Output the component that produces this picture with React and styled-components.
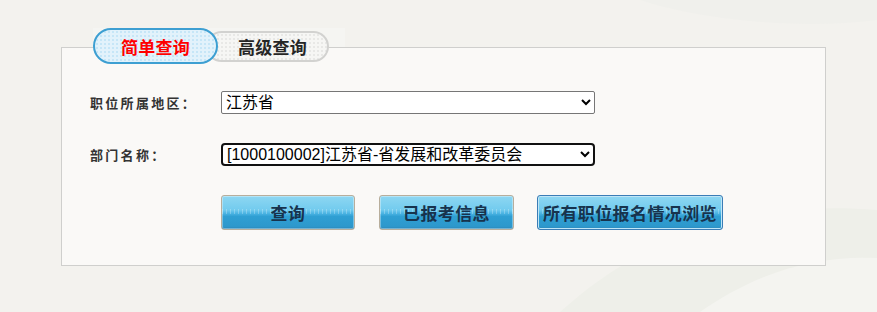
import styled, { createGlobalStyle } from 'styled-components';

const GlobalStyle = createGlobalStyle`
    html, body {
        margin: 0;
        padding: 0;
        background: #f3f2ee;
    }
    body {
        font-family: "Noto Sans CJK SC", "Noto Sans", sans-serif;
        overflow: hidden;
    }
`;

const regions = ['江苏省'];
const departments = ['[1000100002]江苏省-省发展和改革委员会'];

const App = () => {
    return (
        <Page>
            <GlobalStyle />
            <Backdrop viewBox="0 0 877 312" preserveAspectRatio="none">
                <path d="M560 312 C 650 230, 760 200, 877 210 L 877 312 Z" fill="#eeefe9" />
                <path d="M700 312 C 760 270, 820 255, 877 258 L 877 312 Z" fill="#f4f4f0" />
                <path d="M640 0 C 700 20, 800 30, 877 20 L 877 0 Z" fill="#f0f0ec" />
            </Backdrop>
            <Box>
                <TabStrip>
                    <Tab $active>简单查询</Tab>
                    <Tab>高级查询</Tab>
                </TabStrip>
                <Panel>
                    <Row>
                        <Label>职位所属地区：</Label>
                        <Select defaultValue={regions[0]}>
                            {regions.map(r => <option key={r}>{r}</option>)}
                        </Select>
                    </Row>
                    <Row>
                        <Label>部门名称：</Label>
                        <Select $focused defaultValue={departments[0]}>
                            {departments.map(d => <option key={d}>{d}</option>)}
                        </Select>
                    </Row>
                    <Buttons>
                        <Button $w={134}>查询</Button>
                        <Button $w={135}>已报考信息</Button>
                        <Button $w={186} $hover>所有职位报名情况浏览</Button>
                    </Buttons>
                </Panel>
            </Box>
        </Page>
    );
}

const Page = styled.div`
    position: relative;
    width: 877px;
    height: 312px;
    overflow: hidden;
`;

const Backdrop = styled.svg`
    position: absolute;
    left: 0;
    top: 0;
    width: 100%;
    height: 100%;
    z-index: 0;
`;

const Box = styled.div`
    position: relative;
    z-index: 1;
    width: 765px;
    padding: 28px 0 0 61px;
`;

const TabStrip = styled.div`
    position: relative;
    z-index: 2;
    display: flex;
    align-items: center;
    width: 252px;
    height: 36px;
    margin-left: 32px;
    background: linear-gradient(#f5f5f2 0, #f5f5f2 19px, transparent 19px);
`;

const Tab = styled.div`
    box-sizing: border-box;
    display: flex;
    align-items: center;
    justify-content: center;
    position: relative;
    z-index: ${p => (p.$active ? 2 : 1)};
    width: ${p => (p.$active ? '125px' : '123px')};
    height: ${p => (p.$active ? '36px' : '31px')};
    margin-left: ${p => (p.$active ? '0' : '-12px')};
    padding-left: ${p => (p.$active ? '0' : '10px')};
    border: 2px solid ${p => (p.$active ? '#3d9fd2' : '#d2d2d0')};
    border-radius: 18px;
    background: ${p => (p.$active
        ? 'radial-gradient(circle, #c6e6f7 1px, transparent 1.5px) 0 0 / 4px 4px, #e2f2fb'
        : 'radial-gradient(circle, #e8e8e6 1px, transparent 1.5px) 0 0 / 4px 4px, #f6f6f4')};
    color: ${p => (p.$active ? '#ff0000' : '#262626')};
    font-size: 17px;
    font-weight: bold;
    letter-spacing: 0.3px;
`;

const Panel = styled.div`
    margin-top: -17px;
    border: 1px solid #cfcfcd;
    background: #faf9f7;
    padding: 43px 0 35px 28px;
    display: flex;
    flex-direction: column;
    gap: 29px;
`;

const Row = styled.div`
    display: flex;
    align-items: center;
    height: 23px;
`;

const Label = styled.div`
    width: 131px;
    font-size: 13px;
    font-weight: bold;
    color: #333;
    letter-spacing: 2.3px;
    white-space: nowrap;
`;

const Select = styled.select`
    box-sizing: border-box;
    width: 374px;
    height: 23px;
    padding: 0;
    border: ${p => (p.$focused ? '2px solid #111' : '1px solid #767676')};
    border-radius: ${p => (p.$focused ? '4px' : '2px')};
    background: #fff;
    color: #000;
    font-family: "Liberation Sans", "Noto Sans CJK SC", sans-serif;
    font-size: 16px;
    outline: none;
`;

const Buttons = styled.div`
    display: flex;
    gap: 24px;
    margin-left: 131px;
`;

const Button = styled.button`
    box-sizing: border-box;
    width: ${p => p.$w}px;
    height: 35px;
    padding: 0;
    border: 1px solid ${p => (p.$hover ? '#3b7db6' : '#b8ae9c')};
    border-radius: 3px;
    box-shadow: ${p => (p.$hover ? 'inset 0 0 0 1px #bfe6f7' : 'inset 0 0 0 1px rgba(255,255,255,0.35)')};
    background:
        repeating-linear-gradient(90deg, rgba(255,255,255,0.25) 0 1px, transparent 1px 4px) 0 13px / 100% 5px no-repeat,
        linear-gradient(#8ed7f2 0%, #72cbee 42%, #4db5e4 52%, #2f9fd3 62%, #2d98cc 92%, #2a86b8 100%);
    color: #17334d;
    font-family: "Noto Sans CJK SC", sans-serif;
    font-size: 17px;
    font-weight: bold;
    letter-spacing: 0.4px;
    white-space: nowrap;
    cursor: pointer;
    &:nth-child(3) {
        margin-left: -1px;
    }
`;

export default App;
